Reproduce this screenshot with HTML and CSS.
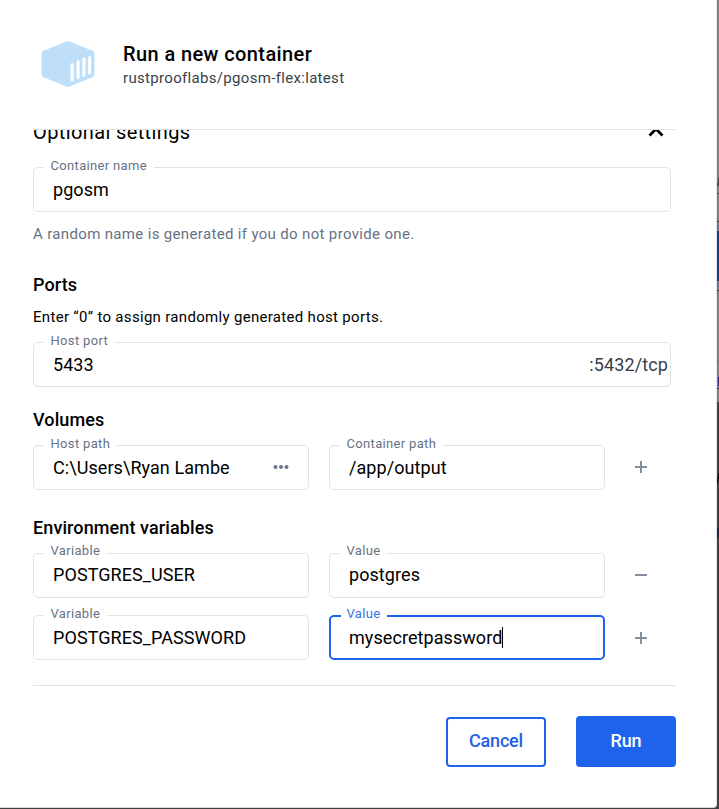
FILE: index.html
```
<!DOCTYPE html>
<html lang="en">
<head>
<meta charset="utf-8">
<title>Run a new container</title>
<link rel="stylesheet" href="styles.css">
</head>
<body>
<div class="backdrop" aria-hidden="true">
  <svg width="2" height="809" viewBox="0 0 2 809" shape-rendering="crispEdges">
    <path fill="#808080" d="M0 0h2v402H0z"/>
    <path fill="#404142" d="M0 402h2v407H0z"/>
    <path fill="#444b58" d="M1 178h1v5H1zM0 183h2v3H0zM0 193h2v1H0z"/>
    <path fill="#707882" d="M0 222h2v9H0zM0 281h2v9H0z"/>
    <path fill="#12398c" d="M0 221h2v1H0zM0 231h2v50H0zM0 290h2v1H0zM0 388h2v1H0z"/>
    <path fill="#686c73" d="M0 361h2v1H0z"/>
    <path fill="#3c2386" d="M1 377h1v9H1z"/>
    <path fill="#080808" d="M1 473h1v6H1zM0 478h1v5H0z"/>
    <path fill="#1e2b40" d="M0 528h2v10H0z"/>
  </svg>
</div>
<main class="dialog">
  <header class="header">
    <svg class="logo" width="54" height="48" viewBox="0 0 54 48">
      <path d="M27 2 51 11.600Q52.500 12.200 52.500 13.300V34.500Q52.500 35.600 51 36.300L27 46 3 36.300Q1.500 35.600 1.500 34.500V13.300Q1.500 12.200 3 11.600Z" fill="#bfdff8" stroke="#bfdff8" stroke-width="2" stroke-linejoin="round"/>
      <path d="M31.100 24.500V40M37.100 21.500V37.500M42.900 19V35.200M48.600 17.500V33" stroke="#fff" stroke-width="3" stroke-linecap="round"/>
    </svg>
    <div>
      <h1 class="title">Run a new container</h1>
      <p class="image">rustprooflabs/pgosm-flex:latest</p>
    </div>
  </header>
  <section class="content">
    <div class="accordion">
      <span>Optional settings</span>
      <svg width="20" height="16" viewBox="0 0 20 16"><path d="M3.500 11.500 10 5l6.500 6.500" fill="none" stroke="#000" stroke-width="2.800"/></svg>
    </div>
    <div class="field"><span class="label">Container name</span><span>pgosm</span></div>
    <p class="helper">A random name is generated if you do not provide one.</p>

    <h2 class="heading heading-ports">Ports</h2>
    <p class="note">Enter “0” to assign randomly generated host ports.</p>
    <div class="field"><span class="label">Host port</span><span>5433</span><span class="suffix">:5432/tcp</span></div>

    <h2 class="heading heading-volumes">Volumes</h2>
    <div class="row">
      <div class="field"><span class="label">Host path</span><span>C:\Users\Ryan Lambe</span>
        <svg class="dots" width="16" height="6" viewBox="0 0 16 6" fill="#6c7589"><circle cx="2.500" cy="3" r="2"/><circle cx="8" cy="3" r="2"/><circle cx="13.500" cy="3" r="2"/></svg>
      </div>
      <div class="field"><span class="label">Container path</span><span>/app/output</span></div>
      <svg class="action raised" width="12" height="12" viewBox="0 0 12 12"><path d="M0 6h12M6 0v12"/></svg>
    </div>

    <h2 class="heading heading-env">Environment variables</h2>
    <div class="row">
      <div class="field field-tight"><span class="label">Variable</span><span>POSTGRES_USER</span></div>
      <div class="field field-tight"><span class="label">Value</span><span>postgres</span></div>
      <svg class="action raised" width="12" height="12" viewBox="0 0 12 12"><path d="M0 6h12"/></svg>
    </div>
    <div class="row row-next">
      <div class="field"><span class="label">Variable</span><span>POSTGRES_PASSWORD</span></div>
      <div class="field focused"><span class="label">Value</span><span>mysecretpassword</span><i class="caret"></i></div>
      <svg class="action" width="12" height="12" viewBox="0 0 12 12"><path d="M0 6h12M6 0v12"/></svg>
    </div>
  </section>
  <footer class="footer">
    <button class="button cancel">Cancel</button>
    <button class="button run">Run</button>
  </footer>
</main>
</body>
</html>
```
FILE: styles.css
```
* { box-sizing: border-box; }

body {
  margin: 0;
  height: 809px;
  overflow: hidden;
  background: #404142;
  font-family: Roboto, sans-serif;
  color: #000;
}

h1, h2, p { margin: 0; }
svg { display: block; flex: none; }

.backdrop {
  position: absolute;
  top: 0;
  right: 0;
}

.dialog {
  position: relative;
  width: 717px;
  height: 808px;
  padding: 0 41px 0 33px;
  background: #fff;
  border-right: 1px solid #e4e4e4;
  border-bottom: 1px solid #d8d8d8;
  border-bottom-right-radius: 4px;
}

.header {
  display: flex;
  gap: 28px;
  height: 129px;
  padding: 40px 0 0 8px;
}

.title {
  margin-top: 2px;
  font-size: 20px;
  line-height: 24px;
  font-weight: 500;
  letter-spacing: 0.4px;
}

.image {
  margin-top: 2px;
  font-size: 15px;
  line-height: 20px;
  letter-spacing: 0.32px;
  color: #393f49;
}

.content {
  width: 643px;
  height: 557px;
  padding-right: 5px;
  overflow: hidden;
  border-top: 1px solid #e1e2e4;
  border-bottom: 1px solid #e1e2e4;
}

.accordion {
  display: flex;
  align-items: center;
  justify-content: space-between;
  margin: -10px 5px 23px 0;
  font-size: 20px;
  line-height: 24px;
  letter-spacing: 0.38px;
}

.field {
  position: relative;
  display: flex;
  align-items: center;
  height: 45px;
  padding: 0 2px 0 19px;
  border: 1px solid #e1e2e6;
  border-radius: 5px;
  font-size: 18px;
  line-height: 24px;
  letter-spacing: 0.07px;
  white-space: pre;
}

.label {
  position: absolute;
  top: -10px;
  left: 10px;
  padding: 0 7px 0 6.5px;
  background: #fff;
  font-size: 13px;
  line-height: 16px;
  letter-spacing: 0.33px;
  color: #677285;
}

.field-tight { padding-bottom: 2px; }
.field-tight .label { top: -11px; }

.focused {
  padding-left: 18px;
  border: 2px solid #1d63ed;
}

.focused .label {
  top: -11px;
  left: 10px;
  padding-left: 5.5px;
  color: #3b70e8;
}

.caret {
  width: 1px;
  height: 21px;
  background: #000;
}

.suffix {
  margin-left: auto;
  letter-spacing: 0.12px;
  color: #393f49;
}

.dots {
  margin: 0 17px 1px auto;
}

.helper, .note {
  font-size: 15px;
  line-height: 20px;
}

.helper {
  margin-top: 12px;
  letter-spacing: 0.34px;
  color: #677285;
}

.note {
  margin: 10px 0 15px;
  letter-spacing: 0.31px;
}

.heading {
  font-size: 18px;
  line-height: 24px;
  font-weight: 500;
  letter-spacing: 0.1px;
}

.heading-ports { margin-top: 29px; }
.heading-volumes { margin: 21px 0 13px; }
.heading-env { margin: 26px 0 13px; }

.row {
  display: grid;
  grid-template-columns: 276px 276px 12px;
  column-gap: 20px;
  align-items: center;
}

.row-next { margin-top: 17px; }

.action {
  margin-left: 10px;
  fill: none;
  stroke: #858ea0;
  stroke-width: 2;
}

.raised { margin-bottom: 1px; }

.footer {
  display: flex;
  justify-content: flex-end;
  align-items: flex-end;
  gap: 30px;
  width: 643px;
  height: 81px;
}

.button {
  width: 100px;
  height: 50px;
  padding: 0 0 2px;
  border: 2px solid #1d63ed;
  border-radius: 4px;
  background: #fff;
  color: #2560e6;
  font: 500 18px/24px Roboto, sans-serif;
  letter-spacing: -0.2px;
}

.run {
  height: 51px;
  background: #1d63ed;
  color: #fff;
}
```
